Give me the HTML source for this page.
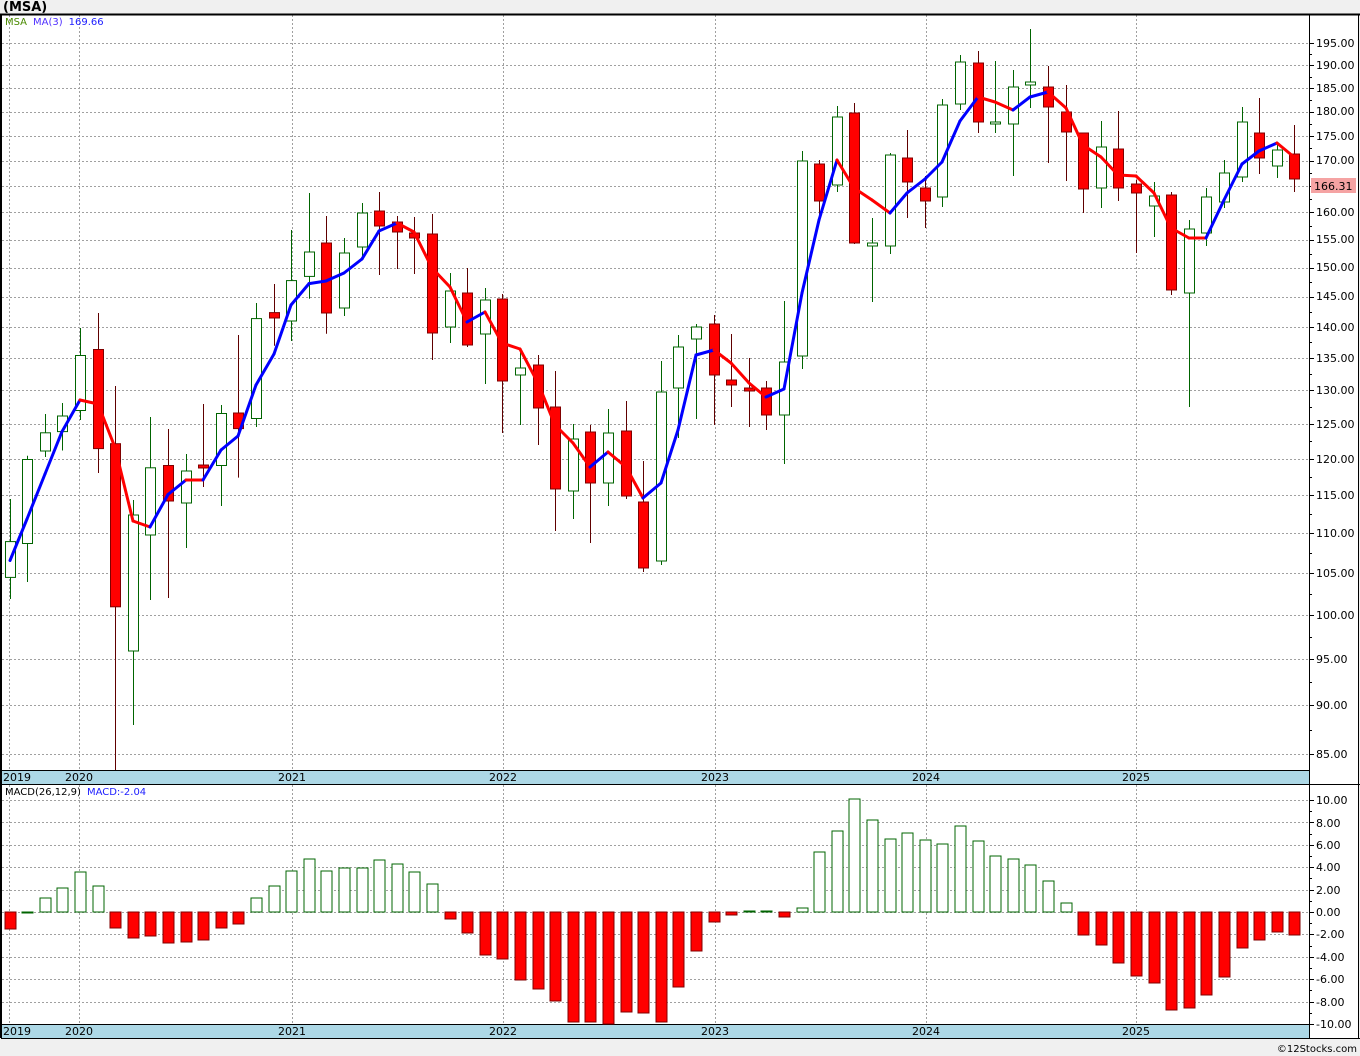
<!DOCTYPE html>
<html><head><meta charset="utf-8"><style>
html,body{margin:0;padding:0;background:#f0f0f0;}
svg{display:block;}
text{font-family:"DejaVu Sans","Liberation Sans",sans-serif;font-size:11px;}
</style></head><body>
<svg id="c" width="1360" height="1056" viewBox="0 0 1360 1056" xmlns="http://www.w3.org/2000/svg">
<rect x="0" y="0" width="1360" height="1056" fill="#f0f0f0"/>
<rect x="1" y="14" width="1358" height="1024" fill="#ffffff"/>
<g id="grid" stroke="#a0a0a0" stroke-width="1" stroke-dasharray="2,2"></g>
<rect x="1" y="770" width="1308" height="14" fill="#add8e6"/>
<rect x="1" y="1024" width="1308" height="14" fill="#add8e6"/>
<g stroke="#000" stroke-width="1">
<line x1="0" y1="14.5" x2="1360" y2="14.5" stroke-width="2"/>
<line x1="1" y1="14" x2="1" y2="1038" stroke-width="2"/>
<line x1="1309.5" y1="14" x2="1309.5" y2="1038"/>
<line x1="1" y1="770.5" x2="1309" y2="770.5"/>
<line x1="1" y1="784.5" x2="1360" y2="784.5"/>
<line x1="1" y1="1024.5" x2="1309" y2="1024.5"/>
<line x1="1" y1="1038.5" x2="1360" y2="1038.5"/>
<line x1="1358.5" y1="14" x2="1358.5" y2="1038"/>
</g>
<g id="ticks" stroke="#000" stroke-width="1"></g>
<g id="macd"></g>
<g id="candles"></g>
<g id="ma" stroke-width="3" fill="none" stroke-linejoin="round" stroke-linecap="round"></g>
<text x="3" y="11" style="font-size:13px;font-weight:bold">(MSA)</text>
<text x="5" y="25" style="font-size:10px"><tspan fill="#4a8a00">MSA</tspan><tspan fill="#5030ff" dx="6">MA(3)</tspan><tspan fill="#2020ff" dx="6">169.66</tspan></text>
<text x="5" y="795" style="font-size:10px"><tspan fill="#000">MACD(26,12,9)</tspan><tspan fill="#2020ff" dx="6">MACD:-2.04</tspan></text>
<g fill="#000">
<text x="1316" y="47">195.00</text><text x="1316" y="69">190.00</text><text x="1316" y="92">185.00</text>
<text x="1316" y="115">180.00</text><text x="1316" y="140">175.00</text><text x="1316" y="164">170.00</text>
<text x="1316" y="216">160.00</text><text x="1316" y="243">155.00</text><text x="1316" y="271">150.00</text>
<text x="1316" y="300">145.00</text><text x="1316" y="331">140.00</text><text x="1316" y="362">135.00</text>
<text x="1316" y="394">130.00</text><text x="1316" y="428">125.00</text><text x="1316" y="463">120.00</text>
<text x="1316" y="499">115.00</text><text x="1316" y="537">110.00</text><text x="1316" y="577">105.00</text>
<text x="1316" y="619">100.00</text><text x="1316" y="663">95.00</text><text x="1316" y="709">90.00</text>
<text x="1316" y="758">85.00</text>
<text x="1316" y="804">10.00</text><text x="1316" y="827">8.00</text><text x="1316" y="849">6.00</text>
<text x="1316" y="871">4.00</text><text x="1316" y="894">2.00</text><text x="1316" y="916">0.00</text>
<text x="1316" y="938">-2.00</text><text x="1316" y="961">-4.00</text><text x="1316" y="983">-6.00</text>
<text x="1316" y="1006">-8.00</text><text x="1316" y="1028">-10.00</text>
<text x="3" y="781">2019</text><text x="65" y="781">2020</text><text x="278" y="781">2021</text>
<text x="489" y="781">2022</text><text x="701" y="781">2023</text><text x="912" y="781">2024</text><text x="1122" y="781">2025</text>
<text x="3" y="1035">2019</text><text x="65" y="1035">2020</text><text x="278" y="1035">2021</text>
<text x="489" y="1035">2022</text><text x="701" y="1035">2023</text><text x="912" y="1035">2024</text><text x="1122" y="1035">2025</text>
</g>
<rect x="1311" y="178" width="45" height="15" fill="#f5a3a3"/>
<text x="1314" y="190" fill="#000">166.31</text>
<text x="1357" y="1052" fill="#000" text-anchor="end" style="font-size:10px">©12Stocks.com</text>
</svg>
<script>
var NS="http://www.w3.org/2000/svg";
function el(p,t,a){var e=document.createElementNS(NS,t);for(var k in a)e.setAttribute(k,a[k]);p.appendChild(e);return e;}
var grid=document.getElementById('grid'),ticks=document.getElementById('ticks');
var py=[43,65.2,88.1,111.5,135.6,160.5,186,212.4,239.6,267.7,296.7,326.8,357.9,390.2,423.8,458.8,495.3,533.3,573.2,615,658.9,705.2,754.2];
py.forEach(function(y){y=Math.round(y)+0.5;el(grid,'line',{x1:2,y1:y,x2:1309,y2:y});el(ticks,'line',{x1:1309,y1:y,x2:1314,y2:y});});
for(var i=0;i<py.length-1;i++){var m=Math.round((py[i]+py[i+1])/2)+0.5;el(ticks,'line',{x1:1309,y1:m,x2:1312,y2:m});}
for(var v=10;v>=-10;v-=2){var y=Math.round(912-v*11.2)+0.5;el(grid,'line',{x1:2,y1:y,x2:1309,y2:y});el(ticks,'line',{x1:1309,y1:y,x2:1314,y2:y});var m=Math.round(912-(v-1)*11.2)+0.5;if(v>-10)el(ticks,'line',{x1:1309,y1:m,x2:1312,y2:m});}
[9.5,79.5,292.5,503.5,715.5,926.5,1136.5].forEach(function(x){el(grid,'line',{x1:x,y1:15,x2:x,y2:770});el(grid,'line',{x1:x,y1:785,x2:x,y2:1024});});
var C=[[499,599,541.6,577.4,'w'],[455.7,582,459.5,543.5,'w'],[414,457,432.8,451,'w'],[403,450.5,416,431.6,'w'],[328,420,355.5,410.5,'w'],[313,473,349.5,448.6,'r'],[386,770,443.7,606.8,'r'],[500,725,515,651,'w'],[417,600,467.8,535,'w'],[429,598,465.5,501,'r'],[454,548,471,503,'w'],[404,487,465,468,'r'],[405,506,413.5,465.5,'w'],[335,477.6,413,428.6,'r'],[303,427,318.6,418.5,'w'],[284,345.7,312.6,318,'r'],[230,341,280.6,321,'w'],[193,298.7,252,276.4,'w'],[216,333.7,243,313,'r'],
[238,316,253,308,'w'],[203,259,213,247,'w'],[192,275,211,226,'r'],[216,269,222,232,'r'],[217,274,233,238,'r'],[214,360,234,333,'r'],[273,343,291,327,'w'],[268,347,293,345,'r'],[288,384,300,334,'w'],[294,433,299,381,'r'],[350,425,368,375,'w'],[355,445,365,408,'r'],[371,531,407,489,'r'],[424,519,439,491,'w'],[425,543,432,483,'r'],[409,506,433,483,'w'],[401,499,431,496,'r'],[461,572,502,568,'r'],
[361,565,392,561,'w'],[335,438,347,388,'w'],[324,419,327,339,'w'],[315,425,324,375,'r'],[334,407,380,385,'r'],[358,427,388,391,'r'],[381,430,388,415,'r'],[301,464,362,415,'w'],[151,369,161,356,'w'],[160,218,164,201,'r'],[106,192,117,185,'w'],[103,244,113,243,'r'],[218,302,243,246,'w'],[153,254,155,246,'w'],[130,218,158,182,'r'],[176,228,188,201,'r'],[99,207,105,197,'w'],
[55,110,62,104,'w'],[51,133,63,122,'r'],[61,133,122,124,'w'],[70,176,87,124,'w'],[29,108,82,85,'w'],[66,163,87,107,'r'],[85,181,112,132,'r'],[133,213,133,189,'r'],[121,208,147,188,'w'],[111,201,149,188,'r'],[180,253,184,193,'r'],[182,237,196,206,'w'],[192,295,195,290,'r'],[220,407,229,293,'w'],[188,246,197,233,'w'],[160,208,173,202,'w'],[107,182,122,177,'w'],[98,174,133,158,'r'],[142,178,150,166,'w'],[125,192,154,179,'r']];
var MA=[560.5,519,474,431.6,400,404,447.5,521,527,494.5,480,480,450,436,385,354,305,283.6,281,273,259,231,223,232,268,287,322,312,343,349,383,425,443,467,452,467,498,483,430,355,350,363,383,397,389,293,220,160,188,200,213,193,179,162,121,97,102,110,97,92,108,145,157,175,176,193,228,238,238,200,164,151,143,157];
var H=[929,912,898,888,872,886,928,938,936,943,942,940,928,924,898,886,871,859,871,868,868,860,864,872,884,919,933,955,959,980,989,1001,1022,1022,1024,1012,1013,1022,987,951,922,915,911,911,917,908,852,831,799,820,839,833,840,844,826,841,856,859,865,881,903,935,945,963,976,983,1010,1008,995,977,948,940,932,935];
function X(i){return Math.round(9.5+i*17.6);}
var cg=document.getElementById('candles'),mg=document.getElementById('macd'),ag=document.getElementById('ma');
C.forEach(function(c,i){var x=X(i)+0.5,r=c[4]=='r';
el(cg,'line',{x1:x,y1:c[0],x2:x,y2:c[1],stroke:r?'#600000':'#006400','stroke-width':1});
var t=Math.min(c[2],c[3]),b=Math.max(c[2],c[3]);if(b-t<2)b=t+2;
el(cg,'rect',{x:x-5,y:t,width:10,height:b-t,fill:r?'#ff0000':'#ffffff',stroke:r?'#800000':'#006400','stroke-width':1});});
H.forEach(function(h,i){var x=X(i)-5.5,neg=h>912;var t=neg?912:h,b=neg?h:912;if(b-t<1)b=t+1;
el(mg,'rect',{x:x+0.5,y:t,width:11,height:b-t,fill:neg?'#ff0000':'#ffffff',stroke:neg?'#800000':'#006400','stroke-width':1});});
for(var i=0;i<MA.length-1;i++){el(ag,'line',{x1:X(i),y1:MA[i],x2:X(i+1),y2:MA[i+1],stroke:MA[i+1]<MA[i]?'#0000ff':'#ff0000'});}
</script>
</body></html>
